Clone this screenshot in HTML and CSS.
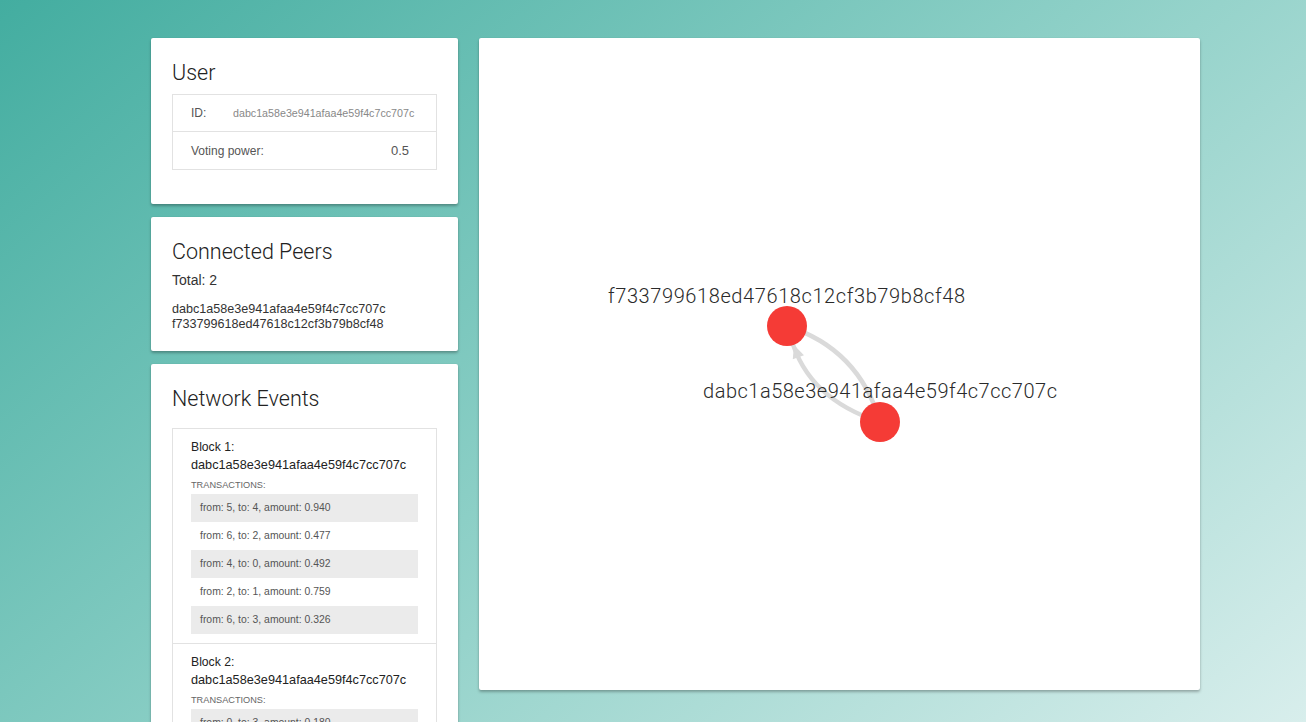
FILE: index.html
```html
<!DOCTYPE html>
<html lang="en">
<head>
<meta charset="utf-8">
<title>Network</title>
<link rel="stylesheet" href="styles.css">
</head>
<body>
<div class="page">
  <div class="layout">
    <div class="sidebar">
      <section class="card user-card">
        <h2 class="card-title">User</h2>
        <div class="info-table">
          <div class="info-row">
            <span class="info-label id-label">ID:</span>
            <span class="info-id">dabc1a58e3e941afaa4e59f4c7cc707c</span>
          </div>
          <div class="info-row info-row-split">
            <span class="info-label">Voting power:</span>
            <span class="info-value">0.5</span>
          </div>
        </div>
      </section>

      <section class="card peers-card">
        <h2 class="card-title">Connected Peers</h2>
        <div class="peers-total">Total: 2</div>
        <ul class="peers-list">
          <li>dabc1a58e3e941afaa4e59f4c7cc707c</li>
          <li>f733799618ed47618c12cf3b79b8cf48</li>
        </ul>
      </section>

      <section class="card events-card">
        <h2 class="card-title">Network Events</h2>
        <div class="events-box">
          <div class="block">
            <div class="block-label">Block 1:</div>
            <div class="block-hash">dabc1a58e3e941afaa4e59f4c7cc707c</div>
            <div class="tx-heading">TRANSACTIONS:</div>
            <ul class="tx-list">
              <li class="tx">from: 5, to: 4, amount: 0.940</li>
              <li class="tx">from: 6, to: 2, amount: 0.477</li>
              <li class="tx">from: 4, to: 0, amount: 0.492</li>
              <li class="tx">from: 2, to: 1, amount: 0.759</li>
              <li class="tx">from: 6, to: 3, amount: 0.326</li>
            </ul>
          </div>
          <div class="block">
            <div class="block-label">Block 2:</div>
            <div class="block-hash">dabc1a58e3e941afaa4e59f4c7cc707c</div>
            <div class="tx-heading">TRANSACTIONS:</div>
            <ul class="tx-list">
              <li class="tx">from: 0, to: 3, amount: 0.180</li>
              <li class="tx">from: 1, to: 5, amount: 0.614</li>
              <li class="tx">from: 3, to: 2, amount: 0.205</li>
            </ul>
          </div>
        </div>
      </section>
    </div>

    <section class="card graph-card">
      <svg class="graph" width="721" height="652" viewBox="0 0 721 652" xmlns="http://www.w3.org/2000/svg">
        <path class="edge" d="M308 288 Q380 311 401 384"/>
        <path class="edge" d="M401 384 Q329 361 312 300"/>
        <polygon class="arrow" points="315,307 325,317.2 313.8,321.2"/>
        <circle class="node" cx="308" cy="288" r="20"/>
        <circle class="node" cx="401" cy="384" r="20"/>
        <text class="node-label" x="129" y="265" textLength="357" lengthAdjust="spacing">f733799618ed47618c12cf3b79b8cf48</text>
        <text class="node-label" x="224" y="360" textLength="354" lengthAdjust="spacing">dabc1a58e3e941afaa4e59f4c7cc707c</text>
      </svg>
    </section>
  </div>
</div>
</body>
</html>
```

FILE: styles.css
```css
html, body {
  margin: 0;
  padding: 0;
}

body {
  font-family: "Liberation Sans", Arial, sans-serif;
  color: #333;
}

.page {
  height: 100vh;
  overflow: hidden;
  background: linear-gradient(140deg, #43ada0 0%, #8ccfc6 50%, #d8eeec 100%);
}

.layout {
  display: flex;
  align-items: flex-start;
  gap: 21px;
  padding: 38px 0 0 151px;
}

.sidebar {
  width: 307px;
  display: flex;
  flex-direction: column;
  gap: 13px;
  flex-shrink: 0;
}

.card {
  background: #fff;
  border-radius: 2px;
  box-shadow: 0 2px 3px rgba(0, 0, 0, 0.28), 0 0 1px rgba(0, 0, 0, 0.12);
}

.card-title {
  margin: 0;
  font-family: Roboto, "Liberation Sans", sans-serif;
  font-weight: 300;
  font-size: 21.5px;
  line-height: 25px;
  color: #222;
}

/* User card */
.user-card {
  padding: 22px 21px 34px;
}

.user-card .card-title {
  margin-bottom: 9px;
}

.info-table {
  border: 1px solid #e2e2e2;
}

.info-row {
  display: flex;
  align-items: center;
  height: 36px;
  padding: 0 18px;
}

.info-row + .info-row {
  border-top: 1px solid #e2e2e2;
}

.info-row-split {
  justify-content: space-between;
  padding-right: 27px;
  height: 37px;
}

.info-label {
  font-size: 12px;
  color: #555;
}

.id-label {
  width: 42px;
  flex-shrink: 0;
}

.info-id {
  font-size: 10.7px;
  color: #888;
}

.info-value {
  font-size: 13px;
  color: #555;
}

/* Peers card */
.peers-card {
  padding: 22px 21px 19px;
}

.peers-total {
  margin-top: 7px;
  font-size: 14px;
  line-height: 18px;
  color: #333;
}

.peers-list {
  list-style: none;
  margin: 13px 0 0;
  padding: 0;
  font-size: 12.6px;
  line-height: 15px;
  color: #333;
}

/* Events card */
.events-card {
  padding: 22px 21px 0;
}

.events-card .card-title {
  margin-bottom: 17px;
}

.events-box {
  border: 1px solid #e2e2e2;
  border-bottom: none;
}

.block {
  padding: 10px 18px 9px;
  border-bottom: 1px solid #e2e2e2;
}

.block-label {
  font-size: 12.2px;
  line-height: 16px;
  color: #222;
}

.block-hash {
  font-size: 12.7px;
  line-height: 20px;
  color: #222;
}

.tx-heading {
  margin: 3px 0 2px;
  font-size: 9.2px;
  line-height: 14px;
  color: #666;
}

.tx-list {
  list-style: none;
  margin: 0;
  padding: 0;
}

.tx {
  height: 28px;
  line-height: 28px;
  padding-left: 9px;
  font-size: 10.4px;
  color: #555;
}

.tx:nth-child(odd) {
  background: #ebebeb;
}

/* Graph */
.graph-card {
  width: 721px;
  height: 652px;
  flex-shrink: 0;
}

.graph {
  display: block;
}

.edge {
  fill: none;
  stroke: #dadada;
  stroke-width: 4.5;
}

.arrow {
  fill: #dadada;
}

.node {
  fill: #f53b36;
}

.node-label {
  font-family: Roboto, "Liberation Sans", sans-serif;
  font-weight: 300;
  font-size: 20px;
  fill: #2a2a2a;
}
```
